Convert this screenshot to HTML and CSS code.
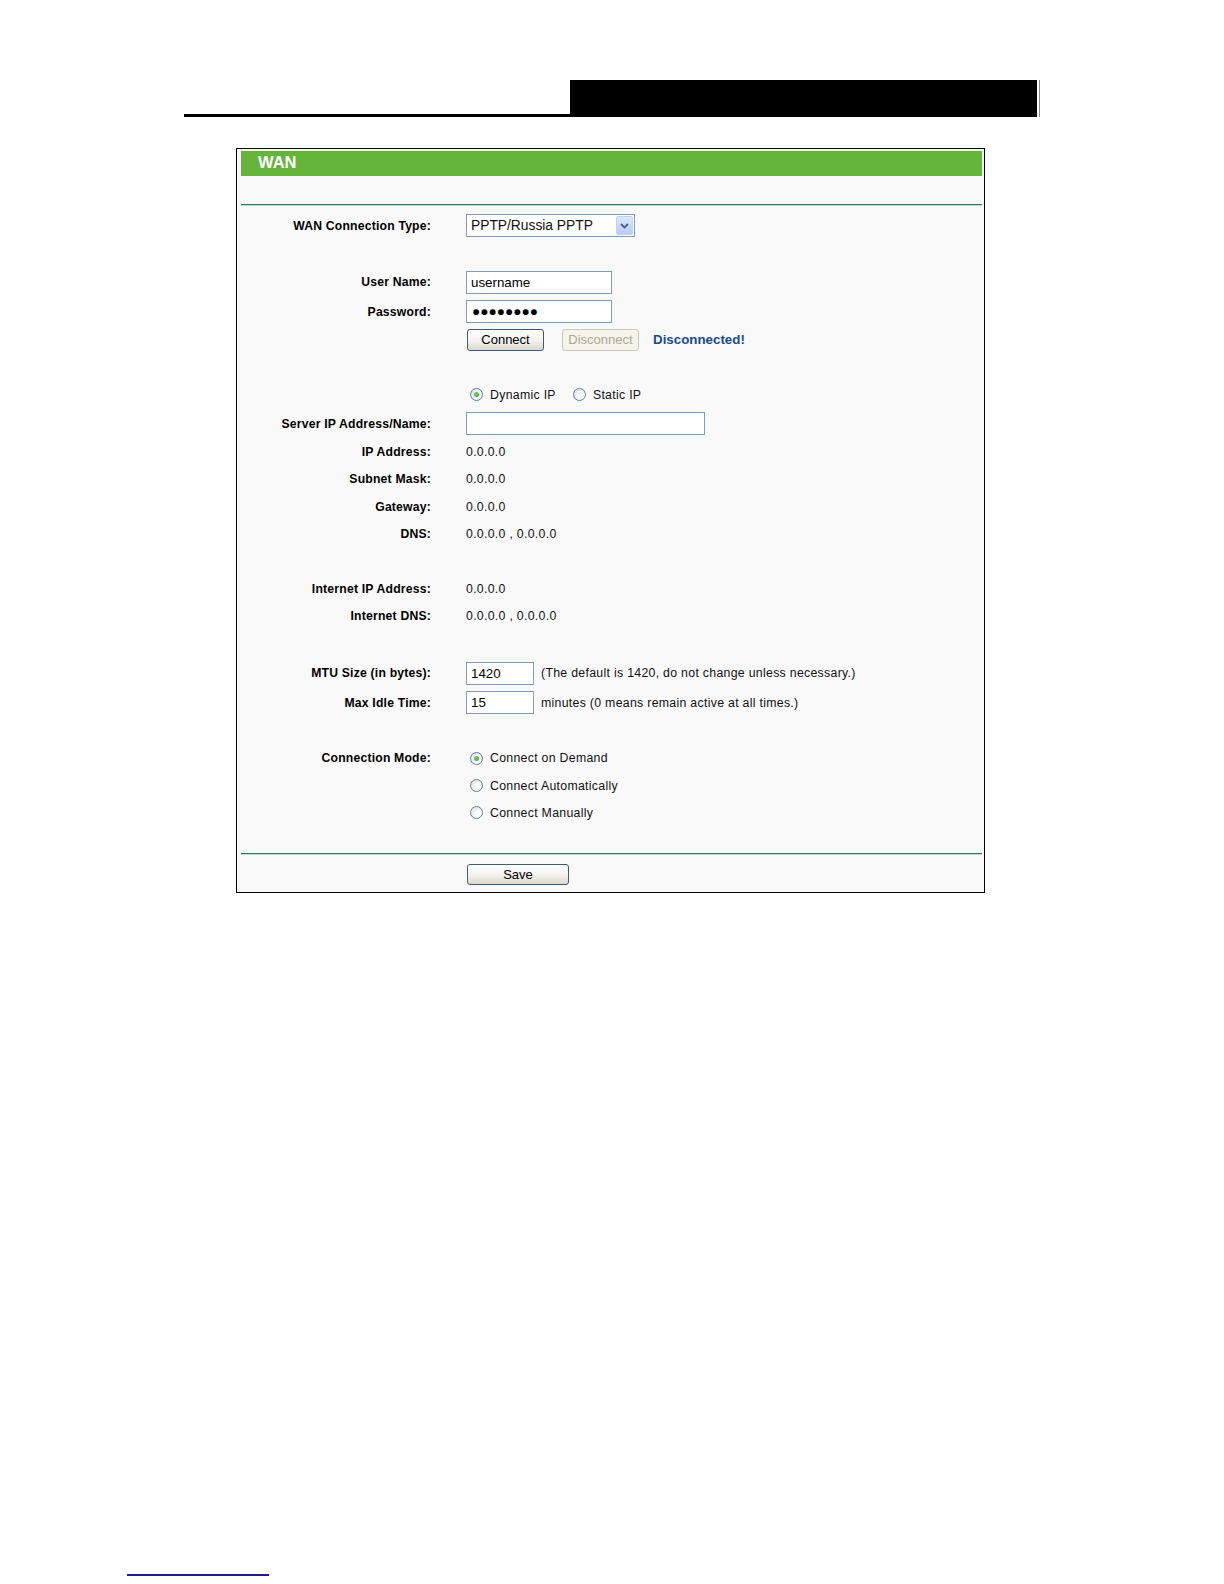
FILE: index.html
```html
<!DOCTYPE html>
<html lang="en">
<head>
    <meta charset="UTF-8">
    <title>WAN</title>
    <link rel="stylesheet" href="styles.css">
</head>
<body>
    <div class="page">
        <!-- Document header -->
        <div class="doc-head">
            <div class="doc-rule"></div>
            <div class="doc-tab"></div>
            <div class="doc-edge"></div>
        </div>

        <!-- WAN panel -->
        <div class="panel">
            <div class="panel-title">WAN</div>
            <div class="panel-sep"></div>

            <div class="form">
                <div class="row tall">
                    <div class="label">WAN Connection Type:</div>
                    <div class="field">
                        <div class="select">
                            <span>PPTP/Russia PPTP</span>
                            <span class="select-btn">
                                <svg width="9" height="6" viewBox="0 0 9 6"><path d="M1 1 L4.5 4.5 L8 1" fill="none" stroke="#4d6185" stroke-width="1.8"/></svg>
                            </span>
                        </div>
                    </div>
                </div>
                <div class="row blank"></div>

                <div class="row tall">
                    <div class="label">User Name:</div>
                    <div class="field"><input class="text w-user" type="text" value="username"></div>
                </div>
                <div class="row tall">
                    <div class="label">Password:</div>
                    <div class="field"><input class="text w-user pass" type="text" value="●●●●●●●●" readonly></div>
                </div>
                <div class="row">
                    <div class="label"></div>
                    <div class="field">
                        <button class="btn">Connect</button>
                        <button class="btn btn-off" disabled>Disconnect</button>
                        <span class="status">Disconnected!</span>
                    </div>
                </div>
                <div class="row blank"></div>

                <div class="row radio-row">
                    <div class="label"></div>
                    <div class="field">
                        <span class="radio on"></span><span>Dynamic IP</span>
                        <span class="radio second"></span><span>Static IP</span>
                    </div>
                </div>
                <div class="row tall">
                    <div class="label">Server IP Address/Name:</div>
                    <div class="field"><input class="text w-server" type="text" value=""></div>
                </div>
                <div class="row">
                    <div class="label">IP Address:</div>
                    <div class="field">0.0.0.0</div>
                </div>
                <div class="row">
                    <div class="label">Subnet Mask:</div>
                    <div class="field">0.0.0.0</div>
                </div>
                <div class="row">
                    <div class="label">Gateway:</div>
                    <div class="field">0.0.0.0</div>
                </div>
                <div class="row">
                    <div class="label">DNS:</div>
                    <div class="field">0.0.0.0 , 0.0.0.0</div>
                </div>
                <div class="row blank"></div>

                <div class="row">
                    <div class="label">Internet IP Address:</div>
                    <div class="field">0.0.0.0</div>
                </div>
                <div class="row">
                    <div class="label">Internet DNS:</div>
                    <div class="field">0.0.0.0 , 0.0.0.0</div>
                </div>
                <div class="row blank tall"></div>

                <div class="row tall">
                    <div class="label">MTU Size (in bytes):</div>
                    <div class="field">
                        <input class="text w-small" type="text" value="1420">
                        <span class="hint">(The default is 1420, do not change unless necessary.)</span>
                    </div>
                </div>
                <div class="row tall">
                    <div class="label">Max Idle Time:</div>
                    <div class="field">
                        <input class="text w-small" type="text" value="15">
                        <span class="hint">minutes (0 means remain active at all times.)</span>
                    </div>
                </div>
                <div class="row blank"></div>

                <div class="row">
                    <div class="label">Connection Mode:</div>
                    <div class="field"><span class="radio on"></span><span>Connect on Demand</span></div>
                </div>
                <div class="row">
                    <div class="label"></div>
                    <div class="field"><span class="radio"></span><span>Connect Automatically</span></div>
                </div>
                <div class="row">
                    <div class="label"></div>
                    <div class="field"><span class="radio"></span><span>Connect Manually</span></div>
                </div>
            </div>

            <div class="panel-sep"></div>
            <div class="panel-foot">
                <div class="label"></div>
                <button class="btn btn-save">Save</button>
            </div>
        </div>

        <div class="page-foot"></div>
    </div>
</body>
</html>
```

FILE: styles.css
```css
/* WAN settings page */
* { box-sizing: border-box; }
body {
    margin: 0; background: #fff; color: #000;
    font-family: "Liberation Sans", Arial, sans-serif; font-size: 12px;
}
.page { width: 1224px; height: 1584px; padding-top: 80px; }

/* Document header */
.doc-head { display: flex; margin-left: 184px; height: 37px; }
.doc-rule { width: 386px; border-bottom: 3px solid #000; }
.doc-tab { width: 467px; background: #000; }
.doc-edge { width: 1px; margin-left: 2px; background: #8a8a8a; }

/* Panel */
.panel {
    margin: 31px 0 0 236px; width: 749px;
    border: 1px solid #000; background: #f9f9f9;
    padding: 2px 2px 0 4px;
}
.panel-title {
    height: 25px; background: #66b53b; color: #fff;
    font-size: 16.5px; font-weight: bold;
    padding-left: 17px; line-height: 23px;
}
.panel-sep {
    margin-top: 28px; height: 2px;
    border-top: 1px solid #2f7d60; border-bottom: 1px solid #bcd9cc;
}
.form + .panel-sep { margin-top: 0; }

/* Form rows */
.form { padding: 5px 0 26px; }
.row { display: flex; align-items: center; height: 27.3px; }
.row.tall { height: 29.3px; }
.row.radio-row { height: 28.3px; }
.label {
    flex: 0 0 190px; margin-right: 35px; text-align: right;
    font-size: 12.2px; font-weight: bold; letter-spacing: 0.2px;
}
.field {
    display: flex; align-items: center;
    font-size: 12.3px; letter-spacing: 0.3px; color: #111;
}

/* Controls */
.select {
    width: 169px; height: 23px; border: 1px solid #7f9db9; background: #fff;
    display: flex; align-items: center; justify-content: space-between;
    padding-left: 4px; font-size: 13.8px; letter-spacing: 0;
}
.select-btn {
    width: 17px; height: 19px; margin-right: 1px;
    background: linear-gradient(#dde6fd, #b9cbf7); border: 1px solid #c3d1f3;
    border-radius: 2px; display: flex; align-items: center; justify-content: center;
}
.text {
    height: 23px; border: 1px solid #7f9db9; background: #fff; color: #000;
    padding: 0 4px; font-family: "Liberation Sans", Arial, sans-serif; font-size: 13.33px;
    letter-spacing: 0; outline: none;
}
.w-user { width: 146px; }
.w-server { width: 239px; }
.w-small { width: 68px; }
.pass { font-size: 13.7px; padding-left: 5px; }
.hint { margin-left: 7px; }

.btn {
    width: 77px; height: 22px; margin-left: 1px; padding: 0;
    border: 1px solid #3d5b7d; border-radius: 3px;
    background: linear-gradient(#ffffff, #f2f1ec 55%, #dbd8cd);
    font-family: "Liberation Sans", Arial, sans-serif; font-size: 13px;
    letter-spacing: 0; color: #000;
}
.btn-off {
    margin-left: 18px; border-color: #cac8bb; background: #f5f4ea; color: #aca899;
}
.btn-save { width: 102px; height: 21px; }
.status {
    margin-left: 14px; color: #1d4a8d; font-weight: bold;
    font-size: 13.33px; letter-spacing: 0;
}

.radio {
    width: 13px; height: 13px; margin: 0 7px 0 4px; border-radius: 50%;
    border: 1px solid #5f7fa6;
    background: radial-gradient(circle at 65% 65%, #ffffff 20%, #dcdbd4 90%);
    display: inline-flex; align-items: center; justify-content: center;
}
.radio.on::after {
    content: ""; width: 5px; height: 5px; border-radius: 50%;
    background: radial-gradient(circle at 40% 40%, #7ed46b, #24a11c);
}
.radio.second { margin-left: 17px; }

/* Footer */
.panel-foot { display: flex; align-items: center; padding: 9px 0 7px; }

.page-foot { margin: 681px 0 0 127px; width: 142px; border-top: 2px solid #1c1c8a; }
```
